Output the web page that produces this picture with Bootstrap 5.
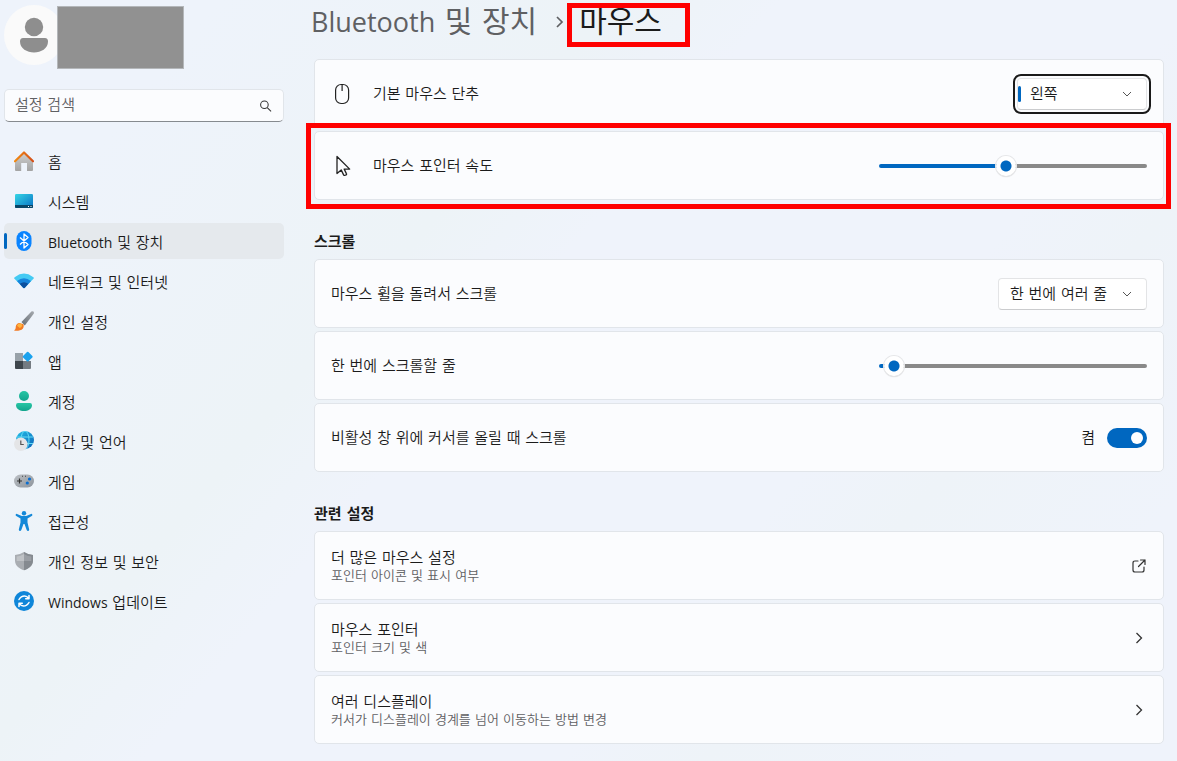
<!DOCTYPE html>
<html lang="ko">
<head>
<meta charset="utf-8">
<meta name="viewport" content="width=device-width, initial-scale=1">
<title>설정 - 마우스</title>
<link href="https://cdn.jsdelivr.net/npm/bootstrap@5.3.0/dist/css/bootstrap.min.css" rel="stylesheet">
<style>
:root{--accent:#0067c0;--ink:#1b1b1b;--muted-ink:#5f6063;--line:#e1e5ea}
body{font-family:"DejaVu Sans","Noto Sans CJK KR",sans-serif;font-size:15px;line-height:20px;font-weight:350;color:var(--ink);
  background:linear-gradient(130deg,#eef3fb 12%,#edf3f7 34%,#eff3fb 43%,#eff3fb 66%,#eef3f8 74%,#eff3fb 88%);min-height:100vh}
:lang(en){font-family:"Open Sans","Noto Sans",sans-serif;font-size:14px;font-weight:400}
.side{width:280px}
.profile{padding-top:5px}
.avatar{width:60px;height:60px;background:#fafafa}
.redacted{width:127px;height:63px;background:#919191;border:1px solid #b4b7ba;margin:1px 0 0 -7px}
.search-box{height:33px;margin-top:20px;background:#fbfcfe;border:1px solid var(--line);border-bottom-color:#868a8f;border-radius:5px;padding:0 11px 0 10px}
.search-box input{font-size:15px;font-weight:350;color:var(--ink)}
.search-box input:focus{box-shadow:none}
.search-box input::placeholder{color:#5f6063;opacity:1}
.side-nav{margin-top:21px}
.side-link{height:36px;padding:4px 10px 0;gap:14px;border-radius:5px;color:var(--ink);text-decoration:none}
.side-link svg{width:20px;height:20px;margin-top:-4px;flex:none}
.side-link:hover,.side-link.active{background:#e5e9ed}
.side-link.active::before{content:"";position:absolute;left:0;top:10px;width:3px;height:16px;border-radius:2px;background:var(--accent)}
.content-pane{padding:0 13px 16px 30px;min-width:0}
.crumbs{font-size:30px;line-height:44px;margin:0 0 15px -3px}
.crumbs :lang(en){font-size:27px}
.crumbs a{color:var(--muted-ink);text-decoration:none}
.crumb-arrow{margin:0 14px 0 18px}
.marked::after{content:"";position:absolute;border:5px solid #f00;pointer-events:none}
.crumbs .marked::after{inset:3px -28px -3px -12px}
.setting.marked::after{inset:-9px -8px -10px -9px}
.setting{min-height:69px;background:#fbfcfe;border:1px solid var(--line);border-radius:5px;padding:0 16px;color:var(--ink);text-decoration:none}
.lead-icon{margin-right:18px}
.stack{display:grid;gap:3px}
.sub{font-size:13px;line-height:16px;color:var(--muted-ink)}
.group-title{font-size:15px;line-height:20px;font-weight:700;margin:32px 0 7px}
.pick{appearance:none;height:32px;border:1px solid #e3e4e6;border-bottom-color:#cbccce;border-radius:4px;padding:0 11px;color:var(--ink);
  font-weight:350;background:#fff}
.pick-wide{width:149px}
.pick-short{width:130px;padding-left:12px;outline:2px solid #1a1a1a;outline-offset:2px}
.pick-wrap svg{position:absolute;right:15px;top:12px;pointer-events:none}
.pick-bar::before{content:"";position:absolute;left:1px;top:8px;width:3px;height:16px;border-radius:2px;background:var(--accent)}
.level{appearance:none;width:268px;height:22px;background:none;margin:0}
.level::-webkit-slider-runnable-track{height:4px;border-radius:2px;
  background:linear-gradient(to right,var(--accent) calc(10px + (100% - 20px)*var(--fill)),#898989 0)}
.level::-webkit-slider-thumb{appearance:none;width:20px;height:20px;margin-top:-8px;border-radius:50%;
  background:radial-gradient(circle,var(--accent) 5px,#fff 6px);box-shadow:0 0 0 1px #e6e7e9,0 1px 1px #bbb}
.form-switch .form-check-input.flip{width:40px;height:20px;margin:0;border:0;float:none;background-size:16px;background-position:right 2px center;background-repeat:no-repeat}
.form-check-input.flip:checked{background-color:var(--accent)}
</style>
</head>
<body>
<div class="d-flex ps-1">
  <aside class="side flex-shrink-0">
    <div class="profile d-flex">
      <div class="avatar rounded-circle">
        <svg width="60" height="60" viewBox="0 0 60 60" fill="#8e8e8e" role="img" aria-label="프로필"><circle cx="30" cy="22" r="9.2"/><path d="M19 33h22q3 0 3 3.500C44 43.500 37 47.500 30 47.500S16 43.500 16 36.500Q16 33 19 33z"/></svg>
      </div>
      <div class="redacted position-relative" aria-hidden="true"></div>
    </div>
    <label class="search-box d-flex align-items-center">
      <input type="search" class="form-control border-0 bg-transparent p-0" placeholder="설정 검색" aria-label="설정 검색">
      <svg width="14" height="14" viewBox="0 0 14 14" fill="none" stroke="#333" stroke-width="1.100"><circle cx="5.700" cy="5.700" r="4"/><path d="M8.700 8.700l4 4"/></svg>
    </label>
    <nav class="side-nav" aria-label="설정">
      <ul class="list-unstyled d-grid gap-1 mb-0">
        <li><a class="side-link d-flex align-items-center" href="#"><svg viewBox="0 0 20 20"><defs><linearGradient id="gHome" x2="0" y2="1"><stop stop-color="#d0d0d0"/><stop offset="1" stop-color="#a3a3a3"/></linearGradient><linearGradient id="gRoof"><stop stop-color="#f28a12"/><stop offset="1" stop-color="#d5501a"/></linearGradient></defs><path fill="url(#gHome)" d="M1 9l9-7.500L19 9v10q0 1-1 1h-5v-8H7.200v8H2q-1 0-1-1z"/><path d="M1 10.300L10 1.500l9 8.800" fill="none" stroke="url(#gRoof)" stroke-width="2.200" stroke-linecap="round" stroke-linejoin="round"/></svg>홈</a></li>
        <li><a class="side-link d-flex align-items-center" href="#"><svg viewBox="0 0 20 20"><defs><linearGradient id="gSys" x2="1" y2="1"><stop stop-color="#35d5e5"/><stop offset="1" stop-color="#0871c5"/></linearGradient></defs><rect x="1" y="3" width="18" height="14" rx="1.200" fill="url(#gSys)"/><path fill="#084668" d="M1 14h18v2q0 1-1 1H2q-1 0-1-1z"/><path fill="#fff" d="M14 15h1v1h-1zM16.500 15h1v1h-1z"/></svg>시스템</a></li>
        <li><a class="side-link active position-relative d-flex align-items-center" href="#" aria-current="page"><svg viewBox="0 0 20 20"><rect x="2.500" width="15" height="20" rx="7.500" fill="#0a84ff"/><path d="M6 6.500l8 7-4 3.500V3l4 3.500-8 7" fill="none" stroke="#fff" stroke-width="1.300" stroke-linejoin="round"/></svg><span><span lang="en">Bluetooth</span> 및 장치</span></a></li>
        <li><a class="side-link d-flex align-items-center" href="#"><svg viewBox="0 0 20 20"><path fill="#45caf3" d="M0 7.300Q0 6.500 1 5.900 10-1 19 5.900q1 .6.9 1.400L10.800 16.800q-.8.700-1.600 0z"/><path fill="#1684dc" d="M3 10Q10 4.400 17 10l-6.200 6.800q-.8.700-1.600 0z"/><path fill="#0b4f9e" d="M5.700 12.800q4.300-3.300 8.600 0l-3.500 4q-.8.700-1.600 0z"/></svg>네트워크 및 인터넷</a></li>
        <li><a class="side-link d-flex align-items-center" href="#"><svg viewBox="0 0 20 20"><defs><linearGradient id="gHandle" x1="1" x2="0" y2="1"><stop stop-color="#a5a9ae"/><stop offset="1" stop-color="#666d75"/></linearGradient></defs><path fill="url(#gHandle)" d="M7.500 11L17.400.6q1-.8 2 0 .9 1 .3 2.200L10.800 14.600z"/><path fill="#f27b24" d="M9.500 13.300q1 4.700-3.500 6-3 .9-6 .3 2-1.200 1.700-3.600.4-3.700 3.800-4z"/><path fill="#ffb33d" d="M3 14.800q1-2.600 3.500-2.300l1.800 1.600q-.5 2.400-2.500 3z"/></svg>개인 설정</a></li>
        <li><a class="side-link d-flex align-items-center" href="#"><svg viewBox="0 0 20 20"><path fill="#98a1a9" d="M1 2h8v8H1z"/><path fill="#3f464d" d="M1 10h8v8H2q-1 0-1-1z"/><path fill="#747b82" d="M9 10h8v7q0 1-1 1H9z"/><rect x="9.900" y="1.900" width="7.600" height="7.600" rx="1" fill="#1ba2ee" transform="rotate(45 13.700 5.700)"/></svg>앱</a></li>
        <li><a class="side-link d-flex align-items-center" href="#"><svg viewBox="0 0 20 20"><defs><linearGradient id="gAcc" x2="0" y2="1"><stop stop-color="#27c6a5"/><stop offset="1" stop-color="#12a48d"/></linearGradient></defs><g fill="url(#gAcc)"><circle cx="10" cy="5" r="5"/><path d="M4 12h12q2 0 2 2.200C18 18 14 20 10 20S2 18 2 14.200Q2 12 4 12z"/></g></svg>계정</a></li>
        <li><a class="side-link d-flex align-items-center" href="#"><svg viewBox="0 0 20 20"><defs><linearGradient id="gGlobe" x2="1" y2="1"><stop stop-color="#24bfe8"/><stop offset="1" stop-color="#0a63b8"/></linearGradient></defs><circle cx="11" cy="9" r="9" fill="url(#gGlobe)"/><g fill="none" stroke="#65dbf5" stroke-width="1"><ellipse cx="11" cy="9" rx="4" ry="9"/><path d="M3 6h16M3 12.500h16"/></g><circle cx="6.800" cy="13.300" r="6.700" fill="#e4e5e7"/><path d="M6.800 9.500v4h3" fill="none" stroke="#555" stroke-width="1.200"/></svg>시간 및 언어</a></li>
        <li><a class="side-link d-flex align-items-center" href="#"><svg viewBox="0 0 20 20"><defs><linearGradient id="gPad" x2="1" y2="1"><stop stop-color="#bcc0c5"/><stop offset="1" stop-color="#8d949c"/></linearGradient></defs><rect y="3.500" width="20" height="13" rx="6.500" fill="url(#gPad)"/><path d="M3 10h5M5.500 7.500v5" stroke="#333" stroke-width="1.200"/><path fill="#444" d="M8 4.800h1v1H8zM11 4.800h1v1h-1z"/><circle cx="15.500" cy="8" r="1.600" fill="#0a6ed1"/><circle cx="13.300" cy="12" r="1.600" fill="#0a6ed1"/></svg>게임</a></li>
        <li><a class="side-link d-flex align-items-center" href="#"><svg viewBox="0 0 20 20" fill="#1488d8"><circle cx="10" cy="2.300" r="2.200"/><path d="M3 2.900l4.800 2.200h4.400L17 2.900q1-.2 1.300.6.300 1-.6 1.500L13.500 7.400v4l1.700 7q0 1.200-1 1.500-1 .1-1.500-.9L10.500 13h-1l-2.200 6q-.5 1-1.500.9-1-.3-1-1.500l1.700-7v-4L2.300 5q-.9-.5-.6-1.500.3-.8 1.300-.6z"/></svg>접근성</a></li>
        <li><a class="side-link d-flex align-items-center" href="#"><svg viewBox="0 0 20 20"><path fill="#a9adb2" d="M10 1q4 2.700 9 3v5.500C19 15 14 18 10 19.200 6 18 1 15 1 9.500V4q5-.3 9-3z"/><path fill="#858a90" d="M10 1q4 2.700 9 3v5.500C19 15 14 18 10 19.200z"/><path fill="#bfc2c6" d="M10 3q-3 2-7.300 2.500V10H10z"/><path fill="#9a9ea4" d="M10 3q3 2 7.300 2.500V10H10z"/></svg>개인 정보 및 보안</a></li>
        <li><a class="side-link d-flex align-items-center" href="#"><svg viewBox="0 0 20 20"><circle cx="10" cy="10" r="10" fill="#0f86d9"/><g fill="none" stroke="#fff" stroke-width="1.500" stroke-linecap="round" stroke-linejoin="round"><path d="M5 8.500Q7 5 10.500 5q2.500 0 4.300 2.600M15 4.500v3.300h-3.300"/><path d="M15 11.500Q13 15 9.500 15 7 15 5.200 12.400M5 15.500v-3.300h3.300"/></g></svg><span><span lang="en">Windows</span> 업데이트</span></a></li>
      </ul>
    </nav>
  </aside>

  <main class="flex-grow-1 content-pane">
    <h1 class="crumbs d-flex align-items-center fw-normal">
      <a href="#"><span lang="en">Bluetooth</span> 및 장치</a>
      <svg class="crumb-arrow" width="10" height="14" viewBox="0 0 10 14" fill="none" stroke="#5f6063" stroke-width="1.700"><path d="M2 2l5 5-5 5"/></svg>
      <span class="marked position-relative">마우스</span>
    </h1>

    <section class="stack" aria-label="마우스">
      <div class="setting d-flex align-items-center">
        <svg class="lead-icon" width="24" height="24" viewBox="0 0 24 24" fill="none" stroke="#222" stroke-width="1.200"><rect x="4.600" y="2.500" width="13" height="19" rx="5.500"/><path d="M11.100 2.500v6.500"/></svg>
        <label for="primary">기본 마우스 단추</label>
        <div class="pick-wrap pick-bar position-relative ms-auto">
          <select id="primary" class="pick pick-short"><option>왼쪽</option><option>오른쪽</option></select>
          <svg width="10" height="8" viewBox="0 0 10 8" fill="none" stroke="#555"><path d="M1 2l4 4 4-4"/></svg>
        </div>
      </div>
      <div class="setting marked position-relative d-flex align-items-center">
        <svg class="lead-icon" width="24" height="24" viewBox="0 0 24 24" fill="none" stroke="#222" stroke-width="1.300" stroke-linejoin="round"><path d="M6 2.500v17l4.200-3.600 2.400 5q1 .8 2.500 0 .8-.5.300-1.300l-2.200-4.500h5.500z"/></svg>
        <label for="speed">마우스 포인터 속도</label>
        <input id="speed" class="level ms-auto" type="range" min="1" max="20" value="10" style="--fill:.474">
      </div>
    </section>

    <h2 class="group-title">스크롤</h2>
    <section class="stack" aria-label="스크롤">
      <div class="setting d-flex align-items-center">
        <label for="wheel">마우스 휠을 돌려서 스크롤</label>
        <div class="pick-wrap position-relative ms-auto">
          <select id="wheel" class="pick pick-wide"><option>한 번에 여러 줄</option><option>한 번에 한 화면</option></select>
          <svg width="10" height="8" viewBox="0 0 10 8" fill="none" stroke="#555"><path d="M1 2l4 4 4-4"/></svg>
        </div>
      </div>
      <div class="setting d-flex align-items-center">
        <label for="lines">한 번에 스크롤할 줄</label>
        <input id="lines" class="level ms-auto" type="range" min="1" max="100" value="3" style="--fill:.02">
      </div>
      <div class="setting d-flex align-items-center">
        <label for="inactive">비활성 창 위에 커서를 올릴 때 스크롤</label>
        <div class="form-switch ms-auto p-0 m-0 d-flex align-items-center gap-2">
          <span class="me-1">켬</span>
          <input id="inactive" class="form-check-input flip" type="checkbox" role="switch" checked>
        </div>
      </div>
    </section>

    <h2 class="group-title">관련 설정</h2>
    <section class="stack" aria-label="관련 설정">
      <a class="setting d-flex align-items-center justify-content-between" href="#">
        <span>더 많은 마우스 설정<span class="sub d-block">포인터 아이콘 및 표시 여부</span></span>
        <svg width="16" height="16" viewBox="0 0 16 16" fill="none" stroke="#333" stroke-width="1.200"><path d="M7 3H4Q2 3 2 5v7q0 2 2 2h7q2 0 2-2V9M9.500 2H14v4.500M14 2L7.500 8.500" stroke-linecap="round" stroke-linejoin="round"/></svg>
      </a>
      <a class="setting d-flex align-items-center justify-content-between" href="#">
        <span>마우스 포인터<span class="sub d-block">포인터 크기 및 색</span></span>
        <svg width="16" height="16" viewBox="0 0 16 16" fill="none" stroke="#333" stroke-width="1.300"><path d="M5.500 3l5 5-5 5"/></svg>
      </a>
      <a class="setting d-flex align-items-center justify-content-between" href="#">
        <span>여러 디스플레이<span class="sub d-block">커서가 디스플레이 경계를 넘어 이동하는 방법 변경</span></span>
        <svg width="16" height="16" viewBox="0 0 16 16" fill="none" stroke="#333" stroke-width="1.300"><path d="M5.500 3l5 5-5 5"/></svg>
      </a>
    </section>
  </main>
</div>
<script src="https://cdn.jsdelivr.net/npm/bootstrap@5.3.0/dist/js/bootstrap.bundle.min.js"></script>
</body>
</html>
